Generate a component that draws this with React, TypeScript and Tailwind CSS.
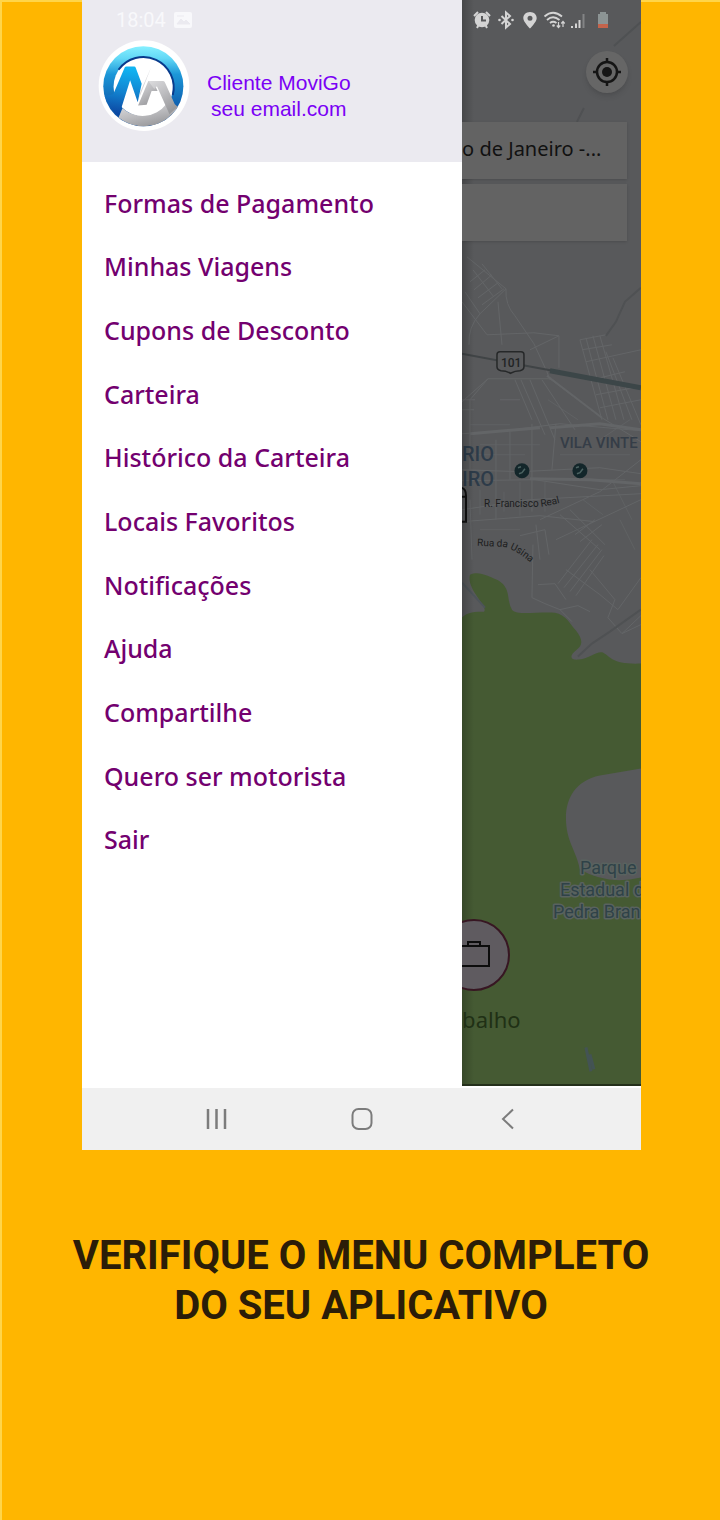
import { useState } from 'react';

const MENU_ITEMS = [
  'Formas de Pagamento',
  'Minhas Viagens',
  'Cupons de Desconto',
  'Carteira',
  'Histórico da Carteira',
  'Locais Favoritos',
  'Notificações',
  'Ajuda',
  'Compartilhe',
  'Quero ser motorista',
  'Sair',
];

function Logo() {
  return (
    <svg viewBox="56 118 278 278" className="size-[92px] shrink-0" role="img" aria-label="MoviGo">
      <defs>
        <linearGradient id="ring" x1="0" y1="0" x2="0" y2="1">
          <stop offset="0" stopColor="#86f0ff" />
          <stop offset="0.15" stopColor="#62d8f6" />
          <stop offset="0.35" stopColor="#1c97d8" />
          <stop offset="0.85" stopColor="#0a4fa3" />
        </linearGradient>
        <linearGradient id="leg" x1="0.3" y1="0" x2="0.2" y2="1">
          <stop offset="0" stopColor="#10b4f2" />
          <stop offset="0.5" stopColor="#1282cf" />
          <stop offset="1" stopColor="#0b3f9c" />
        </linearGradient>
        <linearGradient id="silver" x1="0" y1="0" x2="0.6" y2="1">
          <stop offset="0" stopColor="#dcdcde" />
          <stop offset="0.5" stopColor="#bdbdc0" />
          <stop offset="1" stopColor="#98989b" />
        </linearGradient>
      </defs>
      <circle cx="195" cy="256" r="137" fill="#fff" />
      <circle cx="193" cy="258" r="121" fill="url(#ring)" />
      <circle cx="193" cy="259" r="90" fill="#fff" />
      <path d="M118 208A92 92 0 0 1 282 284" fill="none" stroke="#083a8c" strokeWidth="6" />
      <path d="M118 352A121 121 0 0 0 297 320L262 312A90 90 0 0 1 130 324Z" fill="url(#silver)" />
      <path d="M76 288 102 282 137 200Q138 198 142 198H165Q169 198 170 202L188 250 176 306 153 240 119 348Q90 325 76 288Z" fill="url(#leg)" />
      <path d="M216 202 184 274 180 294Z" fill="#d3d3d6" />
      <path d="M177 316 208 242H222L236 272H218L203 314Z" fill="url(#silver)" />
      <path d="M208 242H252Q256 242 258 246L288 312 297 320 272 342 234 258 226 266Z" fill="url(#silver)" />
    </svg>
  );
}

function StatusIcons() {
  return (
    <div className="flex gap-1 pl-[10px] pt-[10px] text-[#d4d4d4]">
      <svg viewBox="0 0 20 20" className="size-5" fill="none" stroke="currentColor" strokeWidth="2">
        <circle cx="10" cy="10" r="7.300" fill="currentColor" stroke="none" />
        <path d="M2 6 6 2M18 6 14 2M5 18 6.500 15M15 18 13.500 15" />
        <path d="M10 6v4.500h4" stroke="#58595b" />
      </svg>
      <svg viewBox="0 0 20 20" className="size-5" fill="none" stroke="currentColor" strokeWidth="2">
        <path d="M5.500 6 14 14 10 17.500V2.500L14 6 5.500 14" />
        <circle cx="3.500" cy="10" r="1.300" fill="currentColor" stroke="none" />
        <circle cx="16.500" cy="10" r="1.300" fill="currentColor" stroke="none" />
      </svg>
      <svg viewBox="0 0 20 20" className="size-5">
        <path
          d="M10 2C6 2 3.300 4.800 3.300 8.300 3.300 12 10 18.500 10 18.500s6.700-6.500 6.700-10.200C16.700 4.800 14 2 10 2zm0 3.800a2.500 2.500 0 1 1 0 5 2.500 2.500 0 0 1 0-5z"
          fill="currentColor"
          fillRule="evenodd"
        />
      </svg>
      <svg viewBox="0 0 20 20" className="size-5 overflow-visible" fill="none" stroke="currentColor" strokeWidth="1.800">
        <path d="M0.500 6.500Q9 -1 18 6.500M3 10Q9 4.500 15.500 10M6 13Q9 10.500 12.500 13" />
        <circle cx="9.500" cy="15.500" r="1.300" fill="currentColor" stroke="none" />
        <path d="M14.500 12v5M12.800 15.500l1.700 2 1.700-2M19 17v-5M17.300 13.500l1.700-2 1.700 2" strokeWidth="1.200" />
      </svg>
      <svg viewBox="0 0 20 20" className="size-5" fill="currentColor">
        <path d="M3 16h2v2H3zM7 13.500h2V18H7zM10.500 10h2v8h-2z" />
        <path d="M14.500 4h2v14h-2z" opacity="0.35" />
      </svg>
      <svg viewBox="0 0 20 20" className="size-5">
        <path d="M8 2h6v2h2v10H6V4h2z" fill="#8c9494" />
        <path d="M6 14h10v4H6z" fill="#c4644c" />
      </svg>
    </div>
  );
}

function CityMap() {
  return (
    <svg
      viewBox="462 0 179 1086"
      preserveAspectRatio="xMinYMin slice"
      className="absolute inset-0 h-full w-full font-[Roboto,sans-serif]"
      aria-hidden="true"
    >
      <rect x="462" width="800" height="1200" fill="#58595b" />
      {/* roads */}
      <g fill="none" stroke="#636567" strokeWidth="1">
        <path d="M467 257 506 289Q505 305 515 316L534 344 547 372 550 380M506 289 480 314Q468 327 469 345M462 302 487 335M498 302 502 345M487 335 534 333 559 336V368M530 350l29-14" />
        <path d="M470 282l15-12M474 290l18-15M478 298l20-15M482 305l22-16M473 270l20 26M482 264l20 25M465 292l15 22" />
        <path d="M462 402 488 379H550L602 418 641 442M488 379 470 400V470M515 380 532 420M521 380 545 435M530 380 555 440M542 380 575 430M500 400H520M462 400H475M462 410H474" />
        <path d="M580 340 602 420M586 338 608 420M593 336 616 420M600 336 624 420M606 352 632 420M613 358 641 425M580 340 606 335M582 350 612 345M586 362 641 350M592 380 625 372M596 395 634 388M600 408 641 400" />
        <path d="M462 434 505 431 560 424 641 431M462 470 520 472 600 468 641 474M462 481 535 480 600 490 641 486M462 522 540 516 595 522M540 520 600 492 641 460M470 500 472 560M556 424 552 470M532 424V512M510 432V480M496 440V520" />
        <path d="M462 510 530 500 641 494M520 536 545 530 549 555M540 560 536 525M560 515 600 550M570 510 605 545M575 535 595 520M580 542 602 525M556 540 641 500M533 545 532 598 545 604 560 610 578 606 590 612" />
        <path d="M558 584 592 540M564 588 598 545M570 592 602 550M576 596 604 556M566 570 600 595 618 610 641 578M590 570 615 600 608 618 622 634 641 616M538 585 555 584 566 600M560 610 572 622M622 634 641 625" />
        <path d="M470 425h40M480 445h60M475 455h50M560 455h70M565 480h60M480 530h40M548 400l30 20M612 480l20 40M600 440l30-20M480 490v25M504 492v20M520 482v34M545 482v30M620 520l15 30M583 500l20 15" opacity="0.7" />
      </g>
      <g fill="none" stroke="#636567" strokeWidth="3">
        <path d="M550 428 600 424 641 430M470 434 540 428M530 479 590 480 641 484" />
        <path d="M547 376 602 418" strokeWidth="2" />
      </g>
      <g fill="none" stroke="#4f5153">
        <path d="M641 22 614 46M584 108 577 122M641 288 625 302 616 322 606 336M641 610 610 632 592 644 578 657" strokeWidth="2" />
        <path d="M462 354 515 364 553 371" stroke="#404446" strokeWidth="2" />
        <path d="M550 371 641 388" stroke="#3c4648" strokeWidth="5" />
      </g>
      <path d="M500 352h21q3 0 3 3v12q0 3-4 4-5 0-9.500 2.500Q506 371 501 371q-4-1-4-4v-12q0-3 3-3z" fill="#58595b" stroke="#262829" strokeWidth="1.500" />
      <text x="501" y="367" fontSize="12" fontWeight="500" fill="#222425">101</text>
      {/* parks */}
      <path
        d="M470 575C480 571 488 577 497 580C512 588 506 600 512 610C517 616 535 612 555 613C566 615 570 624 576 631C583 640 583 645 577 650C568 657 571 661 579 660C590 659 597 651 603 653C612 658 612 665 641 664H1262V1200H462V618C467 612 476 612 484 612C489 607 466 590 470 575Z"
        fill="#455a33"
      />
      <path d="M462 583 485 608" stroke="#4d5459" strokeWidth="2" />
      <path d="M641 769 600 776C575 781 566 800 566 818C566 842 576 850 580 870Q608 886 641 878H700V769Z" fill="#58595b" />
      <path d="M586 1048 591 1072M590 1055 594 1070" stroke="#434f6b" strokeWidth="3" opacity="0.6" />
      <g fill="#2d3b49" fontWeight="500">
        <text x="462" y="461" fontSize="20">RIO</text>
        <text x="462" y="486" fontSize="20">IRO</text>
        <text x="560" y="448" fontSize="15" fill="#353d47">VILA VINTE</text>
      </g>
      {[522, 580].map((x) => (
        <g key={x}>
          <circle cx={x} cy="471" r="7.500" fill="#13262a" />
          <path d={`M${x - 3} 474l3-1 3-4M${x - 4} 468l3-1`} stroke="#4c6362" strokeWidth="1.500" fill="none" />
        </g>
      ))}
      <defs>
        <path id="francisco" d="M484 507 540 507Q552 506 575 499" />
        <path id="usina" d="M477 546 500 547Q514 547 536 568" />
      </defs>
      <g fontSize="10" fill="#1c1d1e">
        <text><textPath href="#francisco">R. Francisco Real</textPath></text>
        <text><textPath href="#usina">Rua da Usina</textPath></text>
      </g>
      <path d="M460 488q6 0 6 8v26h-6M462 497h4" stroke="#101010" strokeWidth="2" fill="none" />
      <g fontSize="18" fill="#2f4248" stroke="#59625f" strokeWidth="3" paintOrder="stroke" strokeLinejoin="round">
        <text x="580" y="875">Parque</text>
        <text x="560" y="897">Estadual d</text>
        <text x="553" y="919">Pedra Bran</text>
      </g>
    </svg>
  );
}

function RidePane() {
  return (
    <main className="relative flex min-w-0 flex-1 flex-col overflow-hidden border-b-2 border-[#24301b]">
      <CityMap />
      <div className="absolute inset-y-0 left-0 w-3 bg-linear-to-r from-black/20 to-transparent" />
      <div className="relative flex flex-1 flex-col">
        <StatusIcons />
        <button
          aria-label="Minha localização"
          className="mr-[13px] mt-[21px] flex size-[42px] items-center justify-center self-end rounded-full bg-[#666666] shadow-md"
        >
          <svg viewBox="0 0 28 28" className="size-7" fill="none" stroke="#151515" strokeWidth="2.500">
            <circle cx="14" cy="14" r="10" />
            <circle cx="14" cy="14" r="5" fill="#151515" stroke="none" />
            <path d="M14 0v5M14 23v5M0 14h5M23 14h5" />
          </svg>
        </button>
        <div className="mr-[14px] mt-[29px] flex flex-col gap-[5px] font-['Noto_Sans',sans-serif] text-xl text-[#111111]">
          <input
            aria-label="Origem"
            defaultValue="o de Janeiro -..."
            className="h-[57px] w-full bg-[#636363] pb-1 shadow"
          />
          <input aria-label="Destino" className="h-[57px] w-full bg-[#636363] shadow" />
        </div>
        <div className="mb-[49px] mt-auto">
          <button
            aria-label="Trabalho"
            className="-ml-6 flex size-[72px] items-center justify-center rounded-full border-2 border-[#371622] bg-[#5f5b60]"
          >
            <svg viewBox="0 0 36 30" className="h-[30px] w-9" fill="none" stroke="#0c0c0c" strokeWidth="2">
              <path d="M3 6h30v20H3zM12 6V2h12v4" />
            </svg>
          </button>
          <p className="mt-3 font-['Noto_Sans',sans-serif] text-[22px] leading-8 text-[#203015]">balho</p>
        </div>
      </div>
    </main>
  );
}

function Drawer({ active, onSelect }: { active: string | null; onSelect: (item: string) => void }) {
  return (
    <aside className="w-[68%] shrink-0 bg-white">
      <header className="h-[162px] bg-[#ebeaf0] pl-4">
        <div className="flex h-10 items-center gap-2 pl-[18px] font-[Roboto,sans-serif] text-xl text-[#f8f8fb]">
          <span>18:04</span>
          <svg viewBox="0 0 18 16" className="h-4 w-[18px]">
            <rect width="18" height="16" rx="2" fill="currentColor" />
            <path d="M3 12l4-5 3 3 2-2 4 4zM3 4h7" fill="#ebeaf0" stroke="#ebeaf0" />
          </svg>
        </div>
        <div className="flex items-center gap-[17px]">
          <Logo />
          <div className="pt-5 text-center font-['Liberation_Sans',Arial,sans-serif] text-[21px] leading-[26px] text-[#7a00f5]">
            <p>Cliente MoviGo</p>
            <p>seu email.com</p>
          </div>
        </div>
      </header>
      <nav className="pt-[9px]">
        <ul className="grid h-[700px] auto-rows-fr">
          {MENU_ITEMS.map((item) => (
            <li key={item} className="flex items-center">
              <a
                href="#"
                aria-current={active === item ? 'page' : undefined}
                onClick={() => onSelect(item)}
                className="w-full pl-[22px] font-['Noto_Sans',sans-serif] text-[25px] font-medium leading-8 text-[#73006f]"
              >
                {item}
              </a>
            </li>
          ))}
        </ul>
      </nav>
    </aside>
  );
}

function NavigationBar() {
  return (
    <div className="flex h-16 items-center justify-center gap-[114px] border-t-2 border-white bg-[#f0f0f0] text-[#7c7c7c]">
      <button aria-label="Recentes" className="size-8">
        <svg viewBox="0 0 32 32" fill="none" stroke="currentColor" strokeWidth="2.500">
          <path d="M8 6v20M16.500 6v20M25 6v20" />
        </svg>
      </button>
      <button aria-label="Início" className="size-8">
        <svg viewBox="0 0 32 32" fill="none" stroke="currentColor" strokeWidth="2">
          <rect x="6.500" y="6" width="19" height="20" rx="6" />
        </svg>
      </button>
      <button aria-label="Voltar" className="size-8">
        <svg viewBox="0 0 32 32" fill="none" stroke="currentColor" strokeWidth="2">
          <path d="M21 6.500 11 16 21 25.500" />
        </svg>
      </button>
    </div>
  );
}

function App() {
  const [active, setActive] = useState<string | null>(null);

  return (
    <div className="min-h-screen border-l-2 border-t-2 border-[#ffd54a] bg-[#ffb600]">
      <div className="relative -mt-0.5 ml-20 mr-[79px]">
        <div className="flex min-h-[1086px]">
          <Drawer active={active} onSelect={setActive} />
          <RidePane />
        </div>
        <NavigationBar />
      </div>
      <h1 className="pt-[81px] text-center font-[Roboto,sans-serif] text-[40px] font-bold leading-[50px] text-[#2b1d08]">
        VERIFIQUE O MENU COMPLETO
        <br />
        DO SEU APLICATIVO
      </h1>
    </div>
  );
}

export default App;
